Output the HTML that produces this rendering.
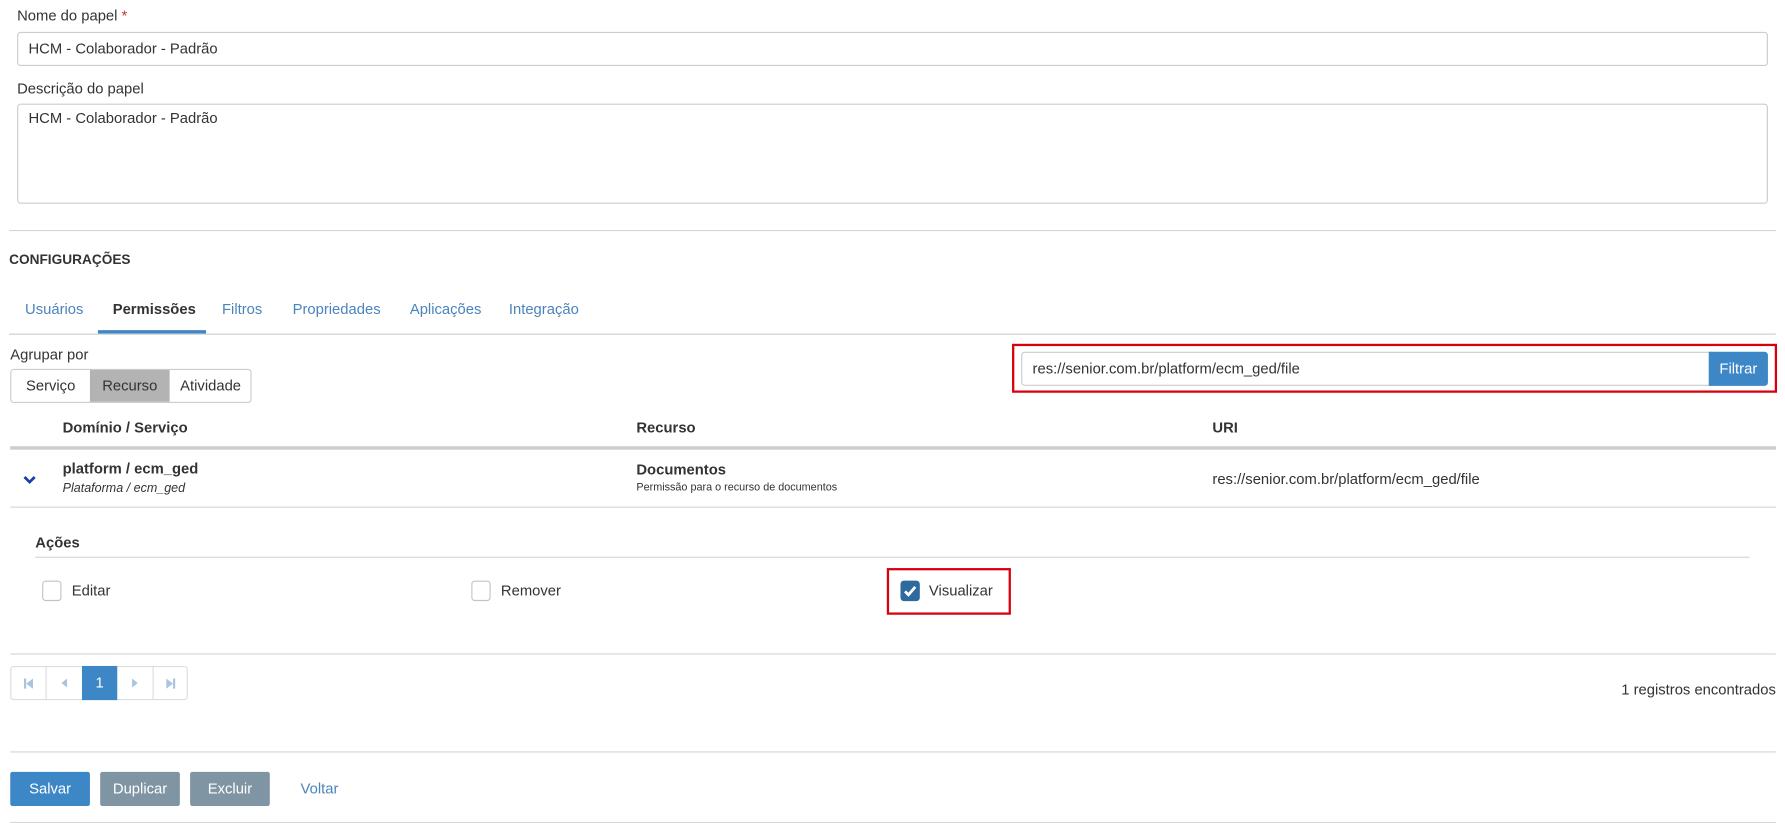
<!DOCTYPE html>
<html><head><meta charset="utf-8"><style>
*{box-sizing:border-box;margin:0;padding:0}
html,body{width:1785px;height:823px;overflow:hidden;background:#fff}
#w{position:absolute;left:0;top:0;width:1568px;height:723px;transform:scale(1.1384);transform-origin:0 0;font-family:"Liberation Sans",sans-serif;font-size:13px;color:#333}
.a{position:absolute;white-space:nowrap}
.line{position:absolute;height:1px;background:#d5d5d5}
.inp{position:absolute;border:1px solid #ccc;border-radius:3px;background:#fff;padding:0 9px}
.b{font-weight:bold}
.tab{position:absolute;top:264px;color:#4a84bd}
.cb{position:absolute;width:17px;height:18px;border:1px solid #c4c4c4;border-radius:3px;background:#fff}
.btn{position:absolute;top:678px;height:30px;color:#fff;border-radius:2px;text-align:center;line-height:30px}
.pg{position:absolute;top:0;height:28px;display:flex;align-items:center;justify-content:center}
</style></head><body><div id="w">
<div class="a" style="left:15px;top:6px">Nome do papel <span style="color:#c0392b">*</span></div>
<div class="inp" style="left:15px;top:28px;width:1538px;height:30px;line-height:28px">HCM - Colaborador - Padrão</div>
<div class="a" style="left:15px;top:70px">Descrição do papel</div>
<div class="inp" style="left:15px;top:91px;width:1538px;height:88px;padding-top:4px">HCM - Colaborador - Padrão</div>
<div class="line" style="left:8px;top:202px;width:1552px"></div>
<div class="a b" style="left:8px;top:221px;font-size:12px">CONFIGURAÇÕES</div>
<div class="tab" style="left:22px">Usuários</div>
<div class="tab b" style="left:99px;color:#333">Permissões</div>
<div class="tab" style="left:195px">Filtros</div>
<div class="tab" style="left:257px">Propriedades</div>
<div class="tab" style="left:360px">Aplicações</div>
<div class="tab" style="left:447px">Integração</div>
<div style="position:absolute;left:86px;top:290px;width:95px;height:3px;background:#3f87c7"></div>
<div class="line" style="left:8px;top:293px;width:1552px;background:#ccc"></div>
<div class="a" style="left:9px;top:304px">Agrupar por</div>
<div style="position:absolute;left:9px;top:324px;width:212px;height:30px;border:1px solid #ccc;border-radius:3px;overflow:hidden">
<div class="a" style="left:0;top:0;width:69px;height:28px;line-height:28px;text-align:center">Serviço</div>
<div class="a" style="left:69px;top:0;width:70px;height:28px;line-height:28px;text-align:center;background:#b3b3b3">Recurso</div>
<div class="a" style="left:139px;top:0;width:72px;height:28px;line-height:28px;text-align:center">Atividade</div>
</div>
<div style="position:absolute;left:889px;top:302px;width:672px;height:43px;border:2px solid #d9000d"></div>
<div class="inp" style="left:897px;top:309px;width:608px;height:30px;line-height:28px;border-radius:3px 0 0 3px">res://senior.com.br/platform/ecm_ged/file</div>
<div class="a" style="left:1501px;top:309px;width:52px;height:30px;background:#3d87c7;color:#fff;text-align:center;line-height:30px;border-radius:0 3px 3px 0">Filtrar</div>
<div class="a b" style="left:55px;top:368px">Domínio / Serviço</div>
<div class="a b" style="left:559px;top:368px">Recurso</div>
<div class="a b" style="left:1065px;top:368px">URI</div>
<div class="line" style="left:9px;top:392px;width:1551px;height:3px;background:#ccc"></div>
<svg class="a" style="left:20px;top:417px" width="12" height="9" viewBox="0 0 12 9"><path d="M1.5 2 L6 6.5 L10.5 2" stroke="#1a3fa8" stroke-width="2.4" fill="none"/></svg>
<div class="a b" style="left:55px;top:404px">platform / ecm_ged</div>
<div class="a" style="left:55px;top:423px;font-size:11px;font-style:italic">Plataforma / ecm_ged</div>
<div class="a b" style="left:559px;top:405px">Documentos</div>
<div class="a" style="left:559px;top:423px;font-size:9.5px">Permissão para o recurso de documentos</div>
<div class="a" style="left:1065px;top:413px">res://senior.com.br/platform/ecm_ged/file</div>
<div class="line" style="left:9px;top:445px;width:1551px"></div>
<div class="a b" style="left:31px;top:469px">Ações</div>
<div class="line" style="left:31px;top:489px;width:1506px"></div>
<div class="cb" style="left:37px;top:510px"></div><div class="a" style="left:63px;top:511px">Editar</div>
<div class="cb" style="left:414px;top:510px"></div><div class="a" style="left:440px;top:511px">Remover</div>
<div style="position:absolute;left:779px;top:499px;width:109px;height:41px;border:2px solid #d9000d"></div>
<div class="cb" style="left:791px;top:510px;background:#2f6a9e;border-color:#2f6a9e"><svg width="15" height="16" viewBox="0 0 15 16"><path d="M3 8.5 L6 11.5 L12 4.5" stroke="#fff" stroke-width="2.4" fill="none"/></svg></div>
<div class="a" style="left:816px;top:511px">Visualizar</div>
<div class="line" style="left:9px;top:574px;width:1551px"></div>
<div style="position:absolute;left:9px;top:585px;width:156px;height:30px;border:1px solid #ddd;border-radius:3px">
<div class="pg" style="left:0;width:31px;border-right:1px solid #ddd"><svg width="8" height="9" viewBox="0 0 8 9"><rect x="0" y="0" width="2" height="9" fill="#a9c4e0"/><path d="M8 0 L2 4.5 L8 9Z" fill="#a9c4e0"/></svg></div>
<div class="pg" style="left:31px;width:31px"><svg width="5" height="8" viewBox="0 0 5 8"><path d="M5 0 L0 4 L5 8Z" fill="#a9c4e0"/></svg></div>
<div class="a" style="left:62px;top:-1px;width:31px;height:30px;line-height:30px;text-align:center;background:#3d87c7;color:#fff">1</div>
<div class="pg" style="left:93px;width:32px;border-right:1px solid #ddd"><svg width="5" height="8" viewBox="0 0 5 8"><path d="M0 0 L5 4 L0 8Z" fill="#a9c4e0"/></svg></div>
<div class="pg" style="left:125px;width:30px"><svg width="8" height="9" viewBox="0 0 8 9"><path d="M0 0 L6 4.5 L0 9Z" fill="#a9c4e0"/><rect x="6" y="0" width="2" height="9" fill="#a9c4e0"/></svg></div>
</div>
<div class="a" style="right:8px;top:598px">1 registros encontrados</div>
<div class="line" style="left:9px;top:660px;width:1551px"></div>
<div class="btn" style="left:9px;width:70px;background:#3d87c7">Salvar</div>
<div class="btn" style="left:88px;width:70px;background:#7f95a3">Duplicar</div>
<div class="btn" style="left:167px;width:70px;background:#7f95a3">Excluir</div>
<div class="a" style="left:264px;top:685px;color:#4a84bd">Voltar</div>
<div class="line" style="left:9px;top:722px;width:1551px"></div>
</div></body></html>
